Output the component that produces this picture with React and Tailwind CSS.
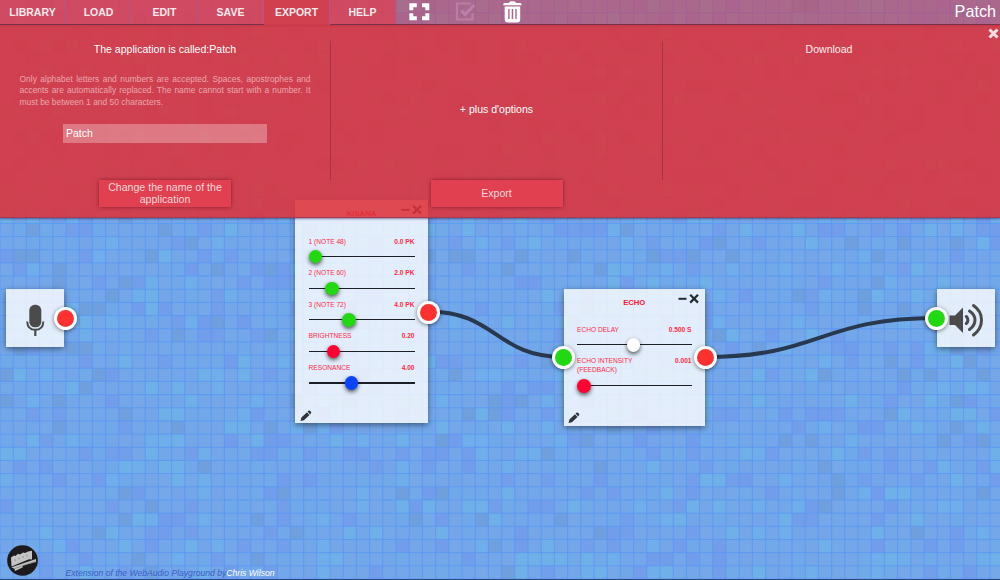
import React from "react";

const TILE_COLORS = [
  "#73a7e9", "#73a7e9", "#75a6e8", "#73a7e9", "#74a8e8", "#71a8ea", "#73a7e9", "#75a5e9",
  "#6faeea", "#739fea", "#73a7e9", "#6eb0e7", "#76a7e8", "#729dea", "#6f9fdd", "#72a9e9",
];

function hash(x, y) {
  let h = (x * 374761393 + y * 668265263) | 0;
  h = Math.imul(h ^ (h >>> 13), 1274126177);
  return (h ^ (h >>> 16)) >>> 0;
}

function Backdrop() {
  const px = 13.2;
  const py = 13.17;
  const tiles = [];
  for (let r = 0; r < 45; r++) {
    for (let c = 0; c < 76; c++) {
      tiles.push(
        <rect key={r + "-" + c} x={c * px} y={r * py - 0.5} width={px + 0.2} height={py + 0.2} fill={TILE_COLORS[hash(c, r) % TILE_COLORS.length]} />
      );
    }
  }
  return (
    <svg className="absolute inset-0" width="1000" height="580">
      {tiles}
      {Array.from({ length: 76 }, (_, i) => (
        <rect key={"v" + i} x={i * px - 0.5} y="0" width="1" height="580" fill="#5896f5" opacity="0.75" />
      ))}
      {Array.from({ length: 45 }, (_, i) => (
        <rect key={"h" + i} x="0" y={i * py - 1} width="1000" height="1" fill="#5896f5" opacity="0.75" />
      ))}
    </svg>
  );
}

function Wires() {
  return (
    <svg className="absolute inset-0" width="1000" height="580" fill="none" stroke="#27384f" strokeWidth="4">
      <path d="M428 311.500C496 311.500 496 357 563 357" />
      <path d="M705 357C820 357 820 318 936 318" />
    </svg>
  );
}

function Port({ place, color }) {
  return (
    <div className={`absolute size-[23px] rounded-full bg-white p-[3px] shadow-[0_1px_4px_rgba(0,0,0,0.5)] ${place}`}>
      <div className={`size-[17px] rounded-full ${color}`} />
    </div>
  );
}

function Slider({ label, value, knob, at, height }) {
  return (
    <div className={`flex flex-col justify-between ${height}`}>
      <div className="flex justify-between text-[6.6px] leading-[9px] text-[#fb2a45]">
        <span className="whitespace-pre-line">{label}</span>
        <b>{value}</b>
      </div>
      <div className="relative h-[1.3px] bg-[#1c1f26]">
        <div className={`absolute top-[-6px] size-[13.5px] rounded-full shadow-[0_2px_4px_rgba(0,0,0,0.65)] ${knob}`} style={{ left: at }} />
      </div>
    </div>
  );
}

function Controls({ place }) {
  return (
    <svg className={`absolute ${place}`} width="22" height="10" fill="none" stroke="#252a30">
      <path d="M0.500 4.800H8.500" strokeWidth="2" />
      <path d="M12.200 0.800L20 8.600M20 0.800L12.200 8.600" strokeWidth="2.200" />
    </svg>
  );
}

function Pencil({ place }) {
  return (
    <svg className={`absolute ${place}`} width="12" height="12" viewBox="0 0 12 12" fill="#30343a">
      <path d="M0.500 11L1.400 7.500L7 2.200L9.500 5L3.900 10.200ZM7.600 1.600L8.700 0.600Q9.500 0.100 10.300 0.900L11 1.700Q11.600 2.500 11 3.300L10.100 4.400Z" />
    </svg>
  );
}

const CARD = "absolute bg-[rgba(255,255,255,0.8)] shadow-[0_2px_6px_rgba(0,0,0,0.45)]";

function Nodes() {
  return (
    <>
      <div className={`${CARD} left-[295.400px] top-[200px] h-[222.500px] w-[132.300px]`}>
        <h2 className="pt-[9px] text-center text-[7.700px] font-bold leading-[9px] text-[#fb1e35]">KISANA</h2>
        <Controls place="left-[106px] top-[5px]" />
        <div className="flex flex-col gap-[11px] px-[13.200px] pt-[18.700px]">
          <Slider label="1 (NOTE 48)" value="0.0 PK" knob="bg-[#22d911]" at="0px" height="h-[20.6px]" />
          <Slider label="2 (NOTE 60)" value="2.0 PK" knob="bg-[#22d911]" at="16.5px" height="h-[20.6px]" />
          <Slider label="3 (NOTE 72)" value="4.0 PK" knob="bg-[#22d911]" at="33.5px" height="h-[20.6px]" />
          <Slider label="BRIGHTNESS" value="0.20" knob="bg-[#ff0033]" at="18px" height="h-[20.6px]" />
          <Slider label="RESONANCE" value="4.00" knob="bg-[#0b44ff]" at="36px" height="h-[20.6px]" />
        </div>
        <Pencil place="left-[4.400px] top-[209.500px]" />
      </div>
      <div className={`${CARD} left-[564px] top-[288.500px] h-[137px] w-[140.500px]`}>
        <h2 className="pt-[9px] text-center text-[7.700px] font-bold leading-[9px] text-[#ff1538]">ECHO</h2>
        <Controls place="left-[114px] top-[5px]" />
        <div className="flex flex-col gap-[11px] px-[13px] pt-[18.300px]">
          <Slider label="ECHO DELAY" value="0.500 S" knob="bg-white" at="49.5px" height="h-[20.6px]" />
          <Slider label={"ECHO INTENSITY\n(FEEDBACK)"} value="0.001" knob="bg-[#ff0033]" at="0px" height="h-[30px]" />
        </div>
        <Pencil place="left-[4px] top-[123.500px]" />
      </div>
      <div className={`${CARD} left-[6px] top-[289px] size-[58px]`}>
        <svg className="ml-[20px] mt-[15px]" width="19" height="34" viewBox="0 0 19 34" fill="#4b4b4b">
          <rect x="3.300" y="0.800" width="12" height="22.500" rx="5.500" />
          <path d="M1.200 17.500Q1.500 25.800 9.300 25.800Q17 25.800 17.400 17.500" fill="none" stroke="#4b4b4b" strokeWidth="2" />
          <path d="M8.200 25.500H10.400V32H8.200Z" />
        </svg>
      </div>
      <div className={`${CARD} left-[937px] top-[289px] size-[58px]`}>
        <svg className="ml-[12px] mt-[13px]" width="36" height="36" viewBox="0 0 36 36" fill="#4b4b4b">
          <path d="M0.500 13.500H6L14 5.500V31L6 23H0.500Z" />
          <g fill="none" stroke="#4b4b4b" strokeWidth="3" strokeLinecap="round">
            <path d="M17.300 14.500A4.600 4.600 0 0 1 17.300 21.500" />
            <path d="M20.500 9Q26 12.500 26 18T20.500 27.500" />
            <path d="M24.500 3.500Q32.500 9 32.500 18T24.500 33" />
          </g>
        </svg>
      </div>
      <Port place="left-[53.700px] top-[307px]" color="bg-[#ff3030]" />
      <Port place="left-[416.800px] top-[300.500px]" color="bg-[#ff3030]" />
      <Port place="left-[552px] top-[346px]" color="bg-[#22d911]" />
      <Port place="left-[693.800px] top-[346px]" color="bg-[#ff3030]" />
      <Port place="left-[925px] top-[306.700px]" color="bg-[#22d911]" />
    </>
  );
}

const TABS = ["LIBRARY", "LOAD", "EDIT", "SAVE", "EXPORT", "HELP"];

function Header() {
  return (
    <header className="relative flex h-[25px] border-b border-[#7a3550] bg-[rgba(221,50,58,0.53)] shadow-[0_1px_2px_rgba(60,10,20,0.6)]">
      {TABS.map((t) => (
        <button
          key={t}
          className={`w-[66px] border-r border-[#b0568a] text-[10.500px] font-bold leading-[23px] text-[#fbe9ec] ${t === "EXPORT" ? "h-[25px] bg-[#d0404f]" : "h-6 bg-[rgba(225,60,78,0.68)]"}`}
        >
          {t}
        </button>
      ))}
      <svg className="ml-[11.500px]" width="22" height="24" viewBox="0 0 22 24" fill="none" stroke="#fff" strokeWidth="4">
        <path d="M3.300 10.300V5.200H8.800M14 5.200H19.300V10.300M19.300 13.200V18.200H14M8.800 18.200H3.300V13.200" />
      </svg>
      <svg className="ml-6" width="24" height="24" viewBox="0 0 24 24" fill="none" stroke="#b97fa9">
        <path d="M17 3.500H3V19.500H18.500V13" strokeWidth="2.200" />
        <path d="M7 10.500L11 14.500L20.300 5" strokeWidth="3.200" />
      </svg>
      <svg className="ml-6" width="22" height="24" viewBox="0 0 22 24" fill="#fff">
        <path d="M1.300 4.200Q1.500 3 3 3H6.700Q7.500 1.200 9 1.200H12Q13.500 1.200 14.200 3H17.700Q19.200 3 19.500 4.200V5.200H1.300Z" />
        <path fillRule="evenodd" d="M2.700 6.500H18.200V20Q17.900 22.500 15.500 22.500H5.500Q3 22.500 2.700 20ZM6.200 9V19H7.600V9ZM9.700 9V19H11.200V9ZM13.300 9V19H14.700V9Z" />
      </svg>
      <h1 className="ml-auto pr-[4px] pt-px text-[16.200px] leading-[20px] text-white">Patch</h1>
    </header>
  );
}

const BTN = "mx-auto flex h-[27px] w-[132px] items-center justify-center bg-[#e04050] text-center text-[10.600px] leading-[12.500px] text-[#f9d5d9] shadow-[0_0_4px_rgba(70,0,10,0.55)]";

function ExportPanel() {
  return (
    <section className="relative grid h-[192.500px] grid-cols-[330px_333px_337px] border-b border-[#a03a55] bg-[rgba(221,50,58,0.88)] text-[10.550px] text-white shadow-[0_1px_2px_rgba(40,20,70,0.5)]">
      <div className="flex flex-col">
        <p className="mt-[18px] text-center leading-[13px]">The application is called:Patch</p>
        <p className="ml-[19.500px] mt-[17.500px] w-[291px] text-justify text-[8.450px] leading-[11.500px] text-[#eba6ad]">
          Only alphabet letters and numbers are accepted. Spaces, apostrophes and accents are automatically replaced. The name cannot start with a number. It must be between 1 and 50 characters.
        </p>
        <input className="mx-auto mt-[16px] h-[19px] w-[204px] bg-[rgba(255,255,255,0.3)] px-[3px] pb-px text-[10.500px] text-white outline-none" defaultValue="Patch" />
        <button className={`${BTN} mb-[11.500px] mt-auto px-2 pb-px`}>Change the name of the application</button>
      </div>
      <div className="flex flex-col">
        <div className="mt-4 flex h-[139px] items-center justify-center border-x border-[#a83344] pb-[2px]">
          <span>+ plus d'options</span>
        </div>
        <button className={`${BTN} mb-[11.500px] mt-auto`}>Export</button>
      </div>
      <div className="flex flex-col">
        <p className="mt-[18px] pr-[5px] text-center leading-[13px] text-[#fdeef0]">Download</p>
      </div>
      <svg className="absolute right-[1px] top-[3px]" width="11" height="11" stroke="#f8dfe2" strokeWidth="3">
        <path d="M1.500 1.500L9.500 9.500M9.500 1.500L1.500 9.500" />
      </svg>
    </section>
  );
}

function Footer() {
  return (
    <footer className="relative mt-auto flex h-[40px] items-end border-b border-[#30486f] pl-[7px]">
      <svg className="mb-[3px]" width="31" height="31" viewBox="0 0 31 31">
        <circle cx="15.500" cy="15.500" r="15.300" fill="#1c1a1c" />
        <g fill="#c4c4c4">
          <path d="M4 12.500L7 10.500L8.500 11L11 8.800L13 9.500L16 7.500L18 8L21 6.500L25 5.800V14.500L22 14.300L4.500 21.500Z" />
          <path d="M4.500 22.200L29 14V17L16 20.500L15.500 22.500L8 26L7.500 24Z" />
        </g>
        <path d="M7 23.800L28 16.500M8 14V16M12 12.500V14.500M16 11V13M20 9.500V11.500" fill="none" stroke="#777" strokeWidth="0.700" />
      </svg>
      <p className="ml-[27.500px] text-[8.600px] italic leading-[11px] text-[#3a5fc4]">
        Extension of the WebAudio Playground by<span className="text-white">Chris Wilson</span>
      </p>
    </footer>
  );
}

export default function App() {
  return (
    <div className="relative flex h-[580px] w-[1000px] flex-col overflow-hidden bg-[#70a4e8] font-['Liberation_Sans',Arial,sans-serif]">
      <Backdrop />
      <Wires />
      <Nodes />
      <Header />
      <ExportPanel />
      <Footer />
    </div>
  );
}
